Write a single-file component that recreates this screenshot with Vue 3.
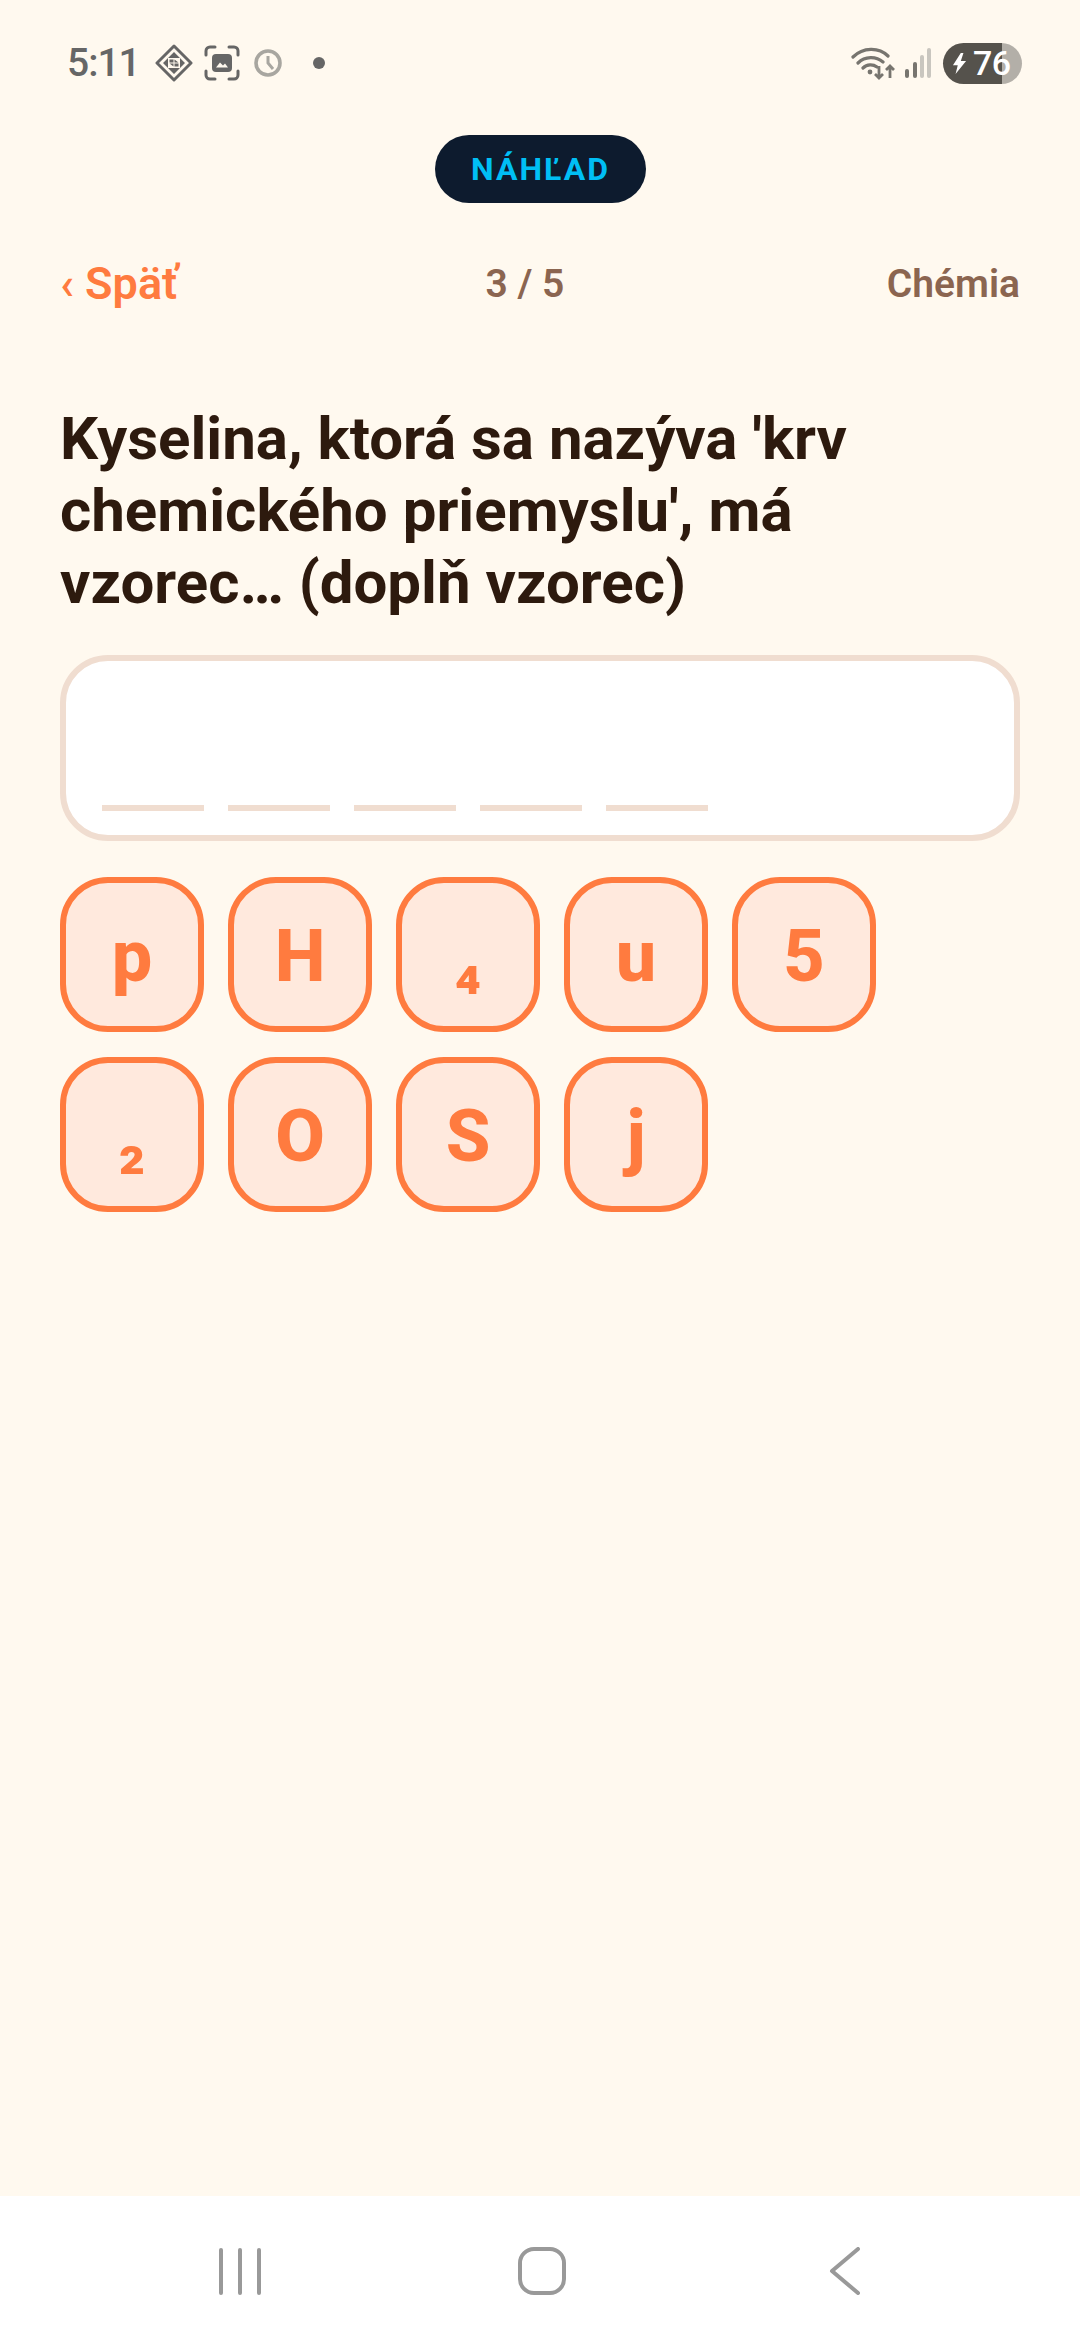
<script setup>
const rows = [
  ['p', 'H', '₄', 'u', '5'],
  ['₂', 'O', 'S', 'j']
];
const slots = [1, 2, 3, 4, 5];
</script>

<template>
  <div class="screen">
    <div class="status">
      <div class="status-left">
        <span class="time">5:11</span>
        <svg class="ic-diamond" width="38" height="38" viewBox="0 0 38 38">
          <path d="M19 2 36 19 19 36 2 19Z" fill="none" stroke="#666" stroke-width="3" stroke-linejoin="round" />
          <path d="M19 8 25 14H13ZM8 19 13 14V24ZM30 19 25 14V24ZM19 30 13 24H25ZM14.500 15.500h4v3h-4ZM19.500 19.500h4v3h-4ZM19.500 15.500l4 3h-4ZM18.500 22.500l-4-3h4Z" fill="#666" />
        </svg>
        <svg class="ic-shot" width="36" height="36" viewBox="0 0 36 36">
          <path d="M2 10V6a4 4 0 0 1 4-4h5M25 2h5a4 4 0 0 1 4 4v4M34 26v4a4 4 0 0 1-4 4h-5M11 34H6a4 4 0 0 1-4-4v-4" fill="none" stroke="#666" stroke-width="3" stroke-linecap="round" />
          <rect x="8" y="9" width="20" height="18" rx="4" fill="#666" />
          <path d="M12 22.500l4-5 3 3 2-2 3 4Z" fill="#fff9ef" />
        </svg>
        <svg class="ic-clock" width="28" height="30" viewBox="0 0 28 30">
          <circle cx="14" cy="15" r="12" fill="none" stroke="#a8a6a0" stroke-width="3.600" />
          <path d="M14 8v7l5 6" fill="none" stroke="#a8a6a0" stroke-width="3" />
        </svg>
        <span class="dot"></span>
      </div>
      <div class="status-right">
        <svg class="ic-wifi" width="44" height="34" viewBox="0 0 44 34">
          <path d="M2 11C12 1 28 1 37 10M7 17C14 10 25 10 32 16M12 22C16 18 22 18 26 21" fill="none" stroke="#77756f" stroke-width="3.200" stroke-linecap="round" />
          <circle cx="19" cy="26" r="2.400" fill="#77756f" />
          <path d="M28 20v12M24 28l4 4 4-4M39 32V20M35 24l4-4 4 4" fill="none" stroke="#77756f" stroke-width="2.800" />
        </svg>
        <svg class="ic-signal" width="28" height="30" viewBox="0 0 28 30">
          <rect x="1" y="21" width="4" height="9" rx="2" fill="#77756f" />
          <rect x="9" y="14" width="4" height="16" rx="2" fill="#77756f" />
          <rect x="16" y="7" width="4" height="23" rx="2" fill="#c9c6bf" />
          <rect x="23" y="0" width="4" height="30" rx="2" fill="#c9c6bf" />
        </svg>
        <div class="battery">
          <svg width="15" height="21" viewBox="0 0 15 24"><path d="M9 0 0 14h5.500L3 24 15 9H9L12 0Z" fill="#fff" /></svg>
          <span>76</span>
        </div>
      </div>
    </div>

    <div class="preview-wrap"><span class="preview">NÁHĽAD</span></div>

    <div class="topbar">
      <span class="back">‹ Späť</span>
      <span class="progress">3 / 5</span>
      <span class="subject">Chémia</span>
    </div>

    <main class="content">
      <h1>Kyselina, ktorá sa nazýva 'krv chemického priemyslu', má vzorec… (doplň vzorec)</h1>
      <div class="answer">
        <span v-for="s in slots" :key="s" class="slot"></span>
      </div>
      <div class="tiles">
        <div v-for="(row, i) in rows" :key="i" class="tile-row">
          <button v-for="t in row" :key="t" class="tile">{{ t }}</button>
        </div>
      </div>
    </main>

    <nav class="navbar">
      <svg width="48" height="48" viewBox="0 0 48 48">
        <path d="M5 3v43M24 3v43M43 3v43" stroke="#999" stroke-width="4" stroke-linecap="round" fill="none" />
      </svg>
      <svg class="home" width="48" height="48" viewBox="0 0 48 48">
        <rect x="2" y="2" width="44" height="44" rx="14" fill="none" stroke="#999" stroke-width="4" />
      </svg>
      <svg width="32" height="48" viewBox="0 0 32 48">
        <path d="M29 2 3 24 29 46" fill="none" stroke="#999" stroke-width="4" stroke-linecap="round" stroke-linejoin="round" />
      </svg>
    </nav>
  </div>
</template>

<style>
body {
  margin: 0;
  background: #fff9ef;
}
</style>

<style scoped>
.screen {
  width: 1080px;
  height: 2340px;
  background: #fff9ef;
  display: flex;
  flex-direction: column;
  font-family: Roboto, "Noto Sans", sans-serif;
  overflow: hidden;
}

.status {
  height: 70px;
  padding: 28px 58px 0 67px;
  display: flex;
  justify-content: space-between;
  align-items: center;
}

.status-left,
.status-right {
  display: flex;
  align-items: center;
}

.time {
  font-size: 39px;
  font-weight: 500;
  letter-spacing: -1px;
  color: #666;
  margin-right: 15px;
}

.ic-shot {
  margin-left: 11px;
}

.ic-clock {
  margin-left: 14px;
}

.dot {
  width: 12px;
  height: 12px;
  margin-left: 31px;
  border-radius: 50%;
  background: #666;
}

.ic-signal {
  margin-left: 9px;
}

.battery {
  margin-left: 11px;
  width: 79px;
  height: 41px;
  box-sizing: border-box;
  padding-left: 9px;
  display: flex;
  align-items: center;
  gap: 6px;
  border-radius: 21px;
  background: linear-gradient(90deg, #55524c 0 59px, #b3afa8 59px);
  color: #fff;
  font-size: 34px;
  font-weight: 500;
  letter-spacing: -0.5px;
}

.preview-wrap {
  display: flex;
  justify-content: center;
  margin-top: 37px;
  padding-left: 1px;
}

.preview {
  width: 211px;
  height: 68px;
  display: flex;
  align-items: center;
  justify-content: center;
  border-radius: 34px;
  background: #0d1b2e;
  color: #00bff5;
  font-size: 32px;
  font-weight: 700;
  letter-spacing: 2px;
}

.topbar {
  margin-top: 57px;
  padding: 0 60px;
  display: grid;
  grid-template-columns: 1fr auto 1fr;
  align-items: center;
  font-size: 39px;
  font-weight: 600;
  line-height: 48px;
}

.back {
  color: #ff7b3f;
  font-size: 45px;
}

.progress {
  color: #8b6550;
  margin-right: 30px;
}

.subject {
  color: #8b6550;
  justify-self: end;
}

.content {
  flex: 1;
  padding: 0 60px;
}

h1 {
  margin: 95px 0 0;
  font-size: 60px;
  line-height: 72px;
  font-weight: 700;
  color: #2d1a0e;
}

.answer {
  margin-top: 36px;
  height: 186px;
  box-sizing: border-box;
  border: 6px solid #f0ddd0;
  border-radius: 48px;
  background: #fff;
  padding: 0 36px 24px;
  display: flex;
  align-items: flex-end;
  gap: 24px;
}

.slot {
  width: 102px;
  height: 6px;
  background: #f0ddd0;
}

.tiles {
  margin-top: 36px;
  display: flex;
  flex-direction: column;
  gap: 25px;
}

.tile-row {
  display: flex;
  gap: 24px;
}

.tile {
  width: 144px;
  height: 155px;
  padding: 4px 0 0;
  box-sizing: border-box;
  border: 6px solid #ff7b3f;
  border-radius: 48px;
  background: #ffe9dd;
  color: #ff7b3f;
  font-family: inherit;
  font-size: 72px;
  font-weight: 800;
}

.navbar {
  height: 144px;
  box-sizing: border-box;
  padding: 6px 0 0 216px;
  background: #fff;
  display: flex;
  align-items: center;
}

.home {
  margin: 0 263px 0 254px;
}
</style>
